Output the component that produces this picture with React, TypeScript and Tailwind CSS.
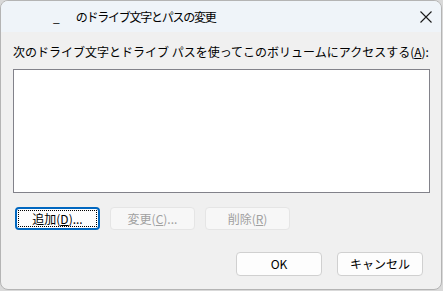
import React from "react";

const font = { fontFamily: '"Noto Sans CJK JP", "Noto Sans", sans-serif' };

function Btn({
  children,
  variant = "normal",
}: {
  children: React.ReactNode;
  variant?: "normal" | "default" | "disabled";
}) {
  if (variant === "default") {
    return (
      <div className="w-[85px] h-[23px] rounded-[4px] border-[2px] border-[#0067c0] bg-[#fdfdfd] p-[1px]">
        <div className="w-full h-full border border-dotted border-black flex items-center justify-center text-[12px] text-black leading-none">
          {children}
        </div>
      </div>
    );
  }
  if (variant === "disabled") {
    return (
      <div className="w-[85px] h-[23px] rounded-[4px] border border-[#e5e5e5] bg-[#f7f7f7] flex items-center justify-center text-[12px] text-[#a0a0a0] leading-none">
        {children}
      </div>
    );
  }
  return (
    <div className="w-[86px] h-[24px] rounded-[4px] border border-[#d0d0d0] bg-[#fdfdfd] flex items-center justify-center text-[12px] text-black leading-none">
      {children}
    </div>
  );
}

export default function App() {
  return (
    <div className="w-[443px] h-[291px] bg-[#d9d9d9] overflow-hidden" style={font}>
      <div className="w-[442px] h-[290px] rounded-[8px] border border-[#b4b4b4] bg-[#f0f0f0] flex flex-col overflow-hidden">
        <div className="h-[31px] bg-[#eff4f9] flex items-center shrink-0">
          <span className="ml-[52px] text-[12px] text-black leading-none">_</span>
          <span className="ml-[16px] text-[12px] text-black leading-none tracking-[-1.25px]">
            のドライブ文字とパスの変更
          </span>
          <svg className="ml-auto mr-[9px]" width="12" height="12" viewBox="0 0 12 12">
            <path d="M0.5 0.5 L11.5 11.5 M11.5 0.5 L0.5 11.5" stroke="#1a1a1a" strokeWidth="1.1" />
          </svg>
        </div>
        <div className="flex flex-col px-[12px]">
          <div className="mt-[14px] text-[12px] leading-none text-black h-[12px]">
            次のドライブ文字とドライブ パスを使ってこのボリュームにアクセスする(<span className="underline">A</span>):
          </div>
          <div className="mt-[11px] w-[417px] h-[124px] border border-[#82828a] bg-white" />
          <div className="mt-[14px] ml-[2px] flex gap-[10px]">
            <Btn variant="default">
              追加(<span className="underline">D</span>)...
            </Btn>
            <Btn variant="disabled">
              変更(<span className="underline">C</span>)...
            </Btn>
            <Btn variant="disabled">
              削除(<span className="underline">R</span>)
            </Btn>
          </div>
          <div className="mt-[22px] flex justify-end gap-[15px] pr-[6px]">
            <Btn>OK</Btn>
            <Btn>キャンセル</Btn>
          </div>
        </div>
      </div>
    </div>
  );
}
